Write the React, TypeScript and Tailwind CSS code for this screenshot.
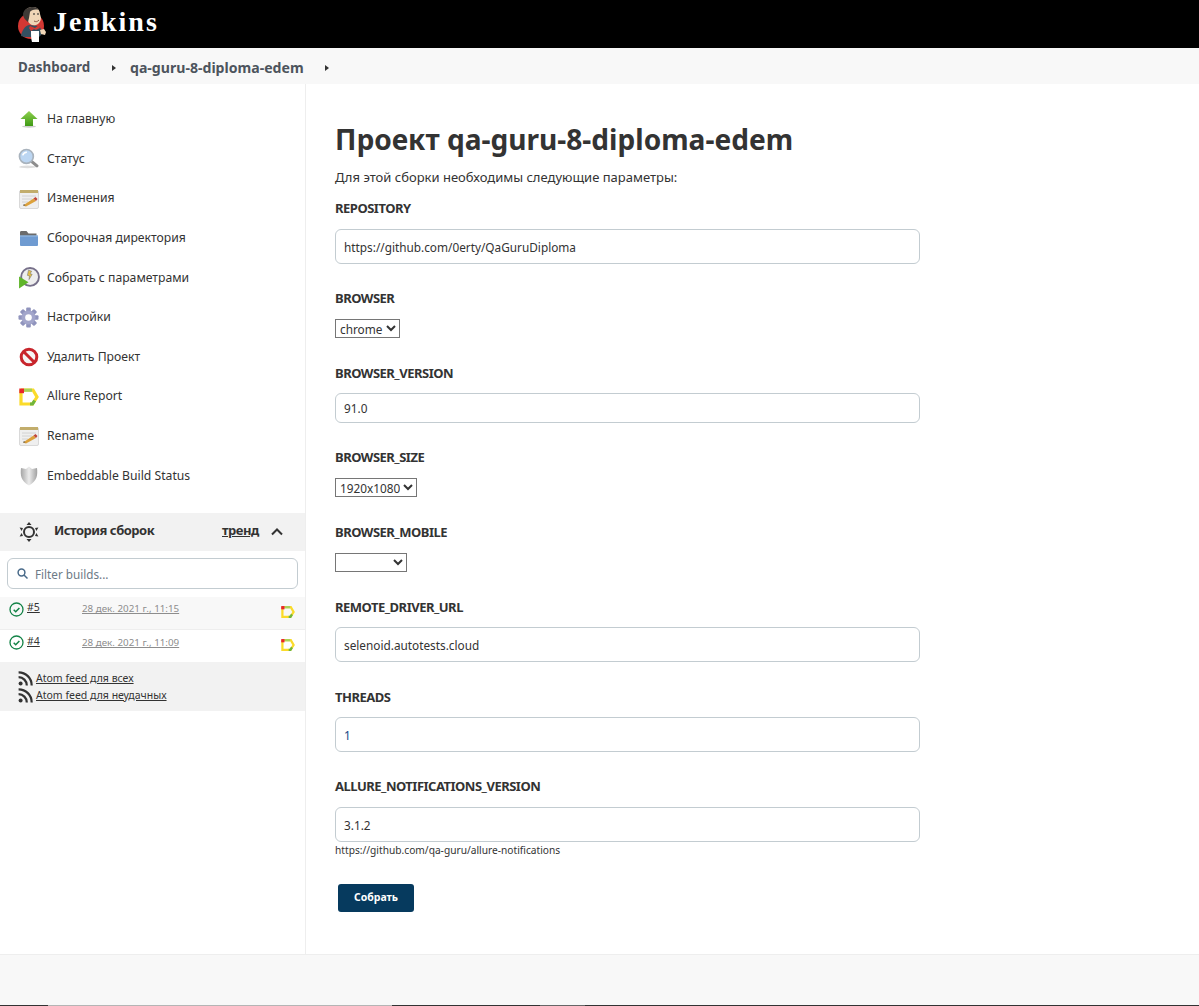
import type { ReactNode } from "react"

function JenkinsLogo() {
  return (
    <svg width="30" height="37" viewBox="0 0 30 37" className="shrink-0">
      <circle cx="14" cy="20" r="13" fill="#d33833" />
      <path d="M4 30c1-6 4-10 8-11l9 1c3 1 4 5 4 8l-4 4-5-1H8z" fill="#335061" />
      <path d="M7 7c1-4 5-6 9-6 4 0 7 3 7 7l1 4c0 3-2 6-5 7-4 1-7-1-8-4-2-2-4-4-4-8z" fill="#f0d6b7" />
      <path d="M6 8c1-5 5-7 10-7 3 0 5 1 6 3-4-1-8 0-9 2l-1 6-1 4C8 14 6 11 6 8z" fill="#3f3a36" />
      <path d="M16 8h2M20 8h2" stroke="#222" strokeWidth="1" />
      <path d="M17 15c2 1 3 1 5-1" stroke="#8c5a46" strokeWidth="1" fill="none" />
      <path d="M13 20l5 2 4-3 1 3-4 2-2-1-3 2-2-3z" fill="#d33833" />
      <path d="M14 25h8v11h-7c-1-3-1-7-1-11z" fill="#fff" />
      <path d="M23 24l4-1 2 3-1 3-4-1z" fill="#f0d6b7" />
    </svg>
  )
}

function HomeIcon() {
  return (
    <svg width="20" height="20" viewBox="0 0 20 20">
      <defs>
        <linearGradient id="hg" x1="0" y1="0" x2="0" y2="1">
          <stop offset="0" stopColor="#8fd14f" />
          <stop offset="1" stopColor="#3f9a15" />
        </linearGradient>
      </defs>
      <ellipse cx="10" cy="17.5" rx="7" ry="1.2" fill="#ccc" />
      <path d="M10 2l8.5 8H14v7H6v-7H1.500z" fill="url(#hg)" />
    </svg>
  )
}

function SearchIcon() {
  return (
    <svg width="21" height="21" viewBox="0 0 20 20">
      <ellipse cx="9" cy="18" rx="8" ry="1.3" fill="#ddd" />
      <path d="M12 12l6 5" stroke="#8d8d8d" strokeWidth="3" strokeLinecap="round" />
      <circle cx="8" cy="8" r="6.6" fill="#bcd6f2" stroke="#a9b3bd" strokeWidth="1.6" />
      <path d="M4.5 7a4 4 0 0 1 4-3" stroke="#fff" strokeWidth="1.5" fill="none" />
    </svg>
  )
}

function NotepadIcon() {
  return (
    <svg width="20" height="20" viewBox="0 0 20 20">
      <rect x="0.5" y="1.5" width="19" height="18" rx="1.5" fill="#efefef" stroke="#c4c4c4" strokeWidth="0.6" />
      <rect x="1" y="1" width="18" height="3" fill="#c2ad6c" />
      <path d="M3 7h14M3 10h10M3 13h6" stroke="#d2d2d2" strokeWidth="1" />
      <path d="M4 16.500L14.500 9.500l2.500 2.500-10 5.500z" fill="#dca13b" />
      <path d="M14.500 9.500l2-1.500 2 2-1.500 2z" fill="#c0453a" />
      <path d="M4 16.500l1-1.500 1.500 1.500z" fill="#555" />
    </svg>
  )
}

function FolderIcon() {
  return (
    <svg width="20" height="20" viewBox="0 0 20 20">
      <path d="M1 4.500C1 3.500 1.500 3 2.500 3h5l2 2.500h8V9H1z" fill="#6b6b6b" />
      <path d="M1 7.500h18V17a1 1 0 0 1-1 1H2a1 1 0 0 1-1-1z" fill="#6f9bd1" />
      <path d="M1 7.500h18v1H1z" fill="#9bbce3" />
    </svg>
  )
}

function BuildIcon() {
  return (
    <svg width="22" height="22" viewBox="0 0 21 21">
      <circle cx="11.500" cy="9.500" r="8.500" fill="#eee" stroke="#77708a" strokeWidth="1.800" />
      <path d="M10 3l3 1-1.500 2.500 2 .5-3 5 .5-3.500-2-.5z" fill="#e6c24a" stroke="#6b6b6b" strokeWidth="0.5" />
      <path d="M1 9l9 5.500L1 20.500z" fill="#5fb52a" />
    </svg>
  )
}

function GearIcon() {
  return (
    <svg width="21" height="21" viewBox="0 0 21 21">
      {[0, 45, 90, 135, 180, 225, 270, 315].map((a) => (
        <rect key={a} x="8.200" y="0.500" width="4.600" height="6" rx="1" fill="#9094bd" transform={`rotate(${a} 10.500 10.500)`} />
      ))}
      <circle cx="10.500" cy="10.500" r="7" fill="#a3a6cb" />
      <circle cx="10.500" cy="10.500" r="3.300" fill="#fff" />
    </svg>
  )
}

function NoIcon() {
  return (
    <svg width="20" height="20" viewBox="0 0 20 20">
      <circle cx="10" cy="10" r="7.800" fill="#f5f5f5" stroke="#c8252c" strokeWidth="3" />
      <path d="M5 5l10 10" stroke="#c8252c" strokeWidth="3" />
    </svg>
  )
}

function AllureIcon({ size }: { size: number }) {
  return (
    <svg width={size} height={size} viewBox="0 0 20 20" fill="none" strokeWidth="3.200">
      <path d="M2 3v14h11.500l4.500-7-4-7H2" stroke="#fbdb2a" />
      <path d="M5 3.200h8" stroke="#a6d15a" />
      <rect x="0.300" y="1.500" width="4.700" height="4.700" fill="#e8262a" />
      <path d="M11 17h2.500l2.200-3.500" stroke="#6fb53d" />
    </svg>
  )
}

function ShieldIcon() {
  return (
    <svg width="20" height="20" viewBox="0 0 20 20">
      <defs>
        <linearGradient id="sg" x1="0" y1="0" x2="1" y2="0">
          <stop offset="0" stopColor="#a5a5a5" />
          <stop offset="0.5" stopColor="#ececec" />
          <stop offset="1" stopColor="#a0a0a0" />
        </linearGradient>
      </defs>
      <path d="M10 0.500l3 2.500 5-1c.8 7 .2 13-8 17.500C1.800 15 1.200 9 2 2l5 1z" fill="url(#sg)" />
    </svg>
  )
}

function HistoryIcon() {
  return (
    <svg width="20" height="20" viewBox="0 0 20 20" fill="#333">
      <circle cx="10" cy="10" r="5" fill="none" stroke="#333" strokeWidth="2" />
      <path d="M10 0l2.500 3h-5zM10 20l-2.500-3h5zM.6 5.500l3.400.6L2.600 9zM19.400 5.500L16 6.100 17.400 9zM.6 14.500l2-3.400L4 14zM19.400 14.500l-2-3.400L16 14z" />
    </svg>
  )
}

function SuccessIcon() {
  return (
    <svg width="15" height="15" viewBox="0 0 15 15" fill="none" stroke="#138347" strokeWidth="1.300">
      <circle cx="7.500" cy="7.500" r="6.500" />
      <path d="M4.700 7.800l2 1.900 3.700-3.800" strokeWidth="1.500" />
    </svg>
  )
}

function RssIcon() {
  return (
    <svg width="15" height="15" viewBox="0 0 15 15" fill="none" stroke="#333" strokeWidth="2.200">
      <circle cx="2.600" cy="12.400" r="2" fill="#333" stroke="none" />
      <path d="M.6 6.200a8.200 8.200 0 0 1 8.200 8.200" />
      <path d="M.6 1.300a13.100 13.100 0 0 1 13.100 13.100" />
    </svg>
  )
}

function Caret() {
  return <span className="block w-0 h-0 border-y-[3.5px] border-y-transparent border-l-[4px] border-l-[#333]" />
}

const tasks: { label: string; icon: ReactNode }[] = [
  { label: "На главную", icon: <HomeIcon /> },
  { label: "Статус", icon: <SearchIcon /> },
  { label: "Изменения", icon: <NotepadIcon /> },
  { label: "Сборочная директория", icon: <FolderIcon /> },
  { label: "Собрать с параметрами", icon: <BuildIcon /> },
  { label: "Настройки", icon: <GearIcon /> },
  { label: "Удалить Проект", icon: <NoIcon /> },
  { label: "Allure Report", icon: <AllureIcon size={20} /> },
  { label: "Rename", icon: <NotepadIcon /> },
  { label: "Embeddable Build Status", icon: <ShieldIcon /> },
]

const builds = [
  { id: "#5", date: "28 дек. 2021 г., 11:15", rowClass: "bg-[#f8f8f8] border-b border-[#eeeeee] h-[33px] pt-[3px]", iconClass: "mt-[2px]" },
  { id: "#4", date: "28 дек. 2021 г., 11:09", rowClass: "bg-white h-[32px] pt-[4px]", iconClass: "mt-[1px]" },
]

function Label({ children }: { children: ReactNode }) {
  return <div className="h-[18px] leading-[18px] text-[13px] tracking-[-0.5px] font-bold text-[#333]">{children}</div>
}

type TextParamProps = { label: string; value: string; short?: boolean; blue?: boolean; box: string }

function TextParam({ label, value, short, blue, box }: TextParamProps) {
  return (
    <div className={box}>
      <Label>{label}</Label>
      <input
        readOnly
        value={value}
        className={`block w-[585px] px-[8px] border border-[#c3ccd1] rounded-[6px] bg-white text-[11.8px] outline-none ${short ? "h-[30px] mt-[11px]" : "h-[35px]"} ${blue ? "text-[#204a87]" : "text-[#333]"}`}
      />
    </div>
  )
}

type SelectParamProps = { label: string; value: string; options: string[]; width: string; box: string }

function SelectParam({ label, value, options, width, box }: SelectParamProps) {
  return (
    <div className={box}>
      <Label>{label}</Label>
      <select
        defaultValue={value}
        className={`block mt-[12px] h-[19px] border border-[#767676] bg-white text-[11.8px] text-[#333] ${width}`}
      >
        {options.map((o) => (
          <option key={o}>{o}</option>
        ))}
      </select>
    </div>
  )
}

export default function App() {
  return (
    <div className="h-[1006px] flex flex-col overflow-hidden bg-white text-[#333] font-['Noto_Sans',sans-serif]">
      <header className="h-[48px] shrink-0 bg-black flex items-center pl-[17px]">
        <JenkinsLogo />
        <span className="ml-[6px] text-[28px] leading-none font-bold text-white tracking-[2px] font-['Liberation_Serif',serif] -mt-[4px]">
          Jenkins
        </span>
      </header>

      <nav className="h-[36px] shrink-0 bg-[#f8f8f8] flex items-center pt-[3px] font-bold text-[#4d545d]">
        <span className="ml-[18px] w-[72px] text-[13.4px]">Dashboard</span>
        <span className="ml-[22px]"><Caret /></span>
        <span className="ml-[14px] w-[174px] whitespace-nowrap text-[14.1px]">qa-guru-8-diploma-edem</span>
        <span className="ml-[21px]"><Caret /></span>
      </nav>

      <div className="flex-1 flex min-h-0">
        <aside className="w-[306px] shrink-0 border-r border-[#eeeeee] pt-[15.6px]">
          <ul>
            {tasks.map((t) => (
              <li key={t.label} className="h-[39.6px] flex items-center text-[12.2px] text-[#333]">
                <span className="w-[47px] flex justify-center pl-[14px] pr-[4px] shrink-0">{t.icon}</span>
                {t.label}
              </li>
            ))}
          </ul>

          <div className="mt-[17.4px] h-[38px] bg-[#f2f2f2] flex items-center text-[13px] tracking-[-0.5px] font-bold">
            <span className="ml-[19px] mr-[15px]"><HistoryIcon /></span>
            <span className="w-[168px] -mt-[2px]">История сборок</span>
            <span className="underline -mt-[2px]">тренд</span>
            <svg width="12" height="8" viewBox="0 0 12 8" className="ml-[12px]" fill="none" stroke="#333" strokeWidth="2">
              <path d="M1 6.500l5-5 5 5" />
            </svg>
          </div>

          <div className="px-[7px] pt-[7px] pb-[8px]">
            <div className="h-[31px] border border-[#c3ccd1] rounded-[6px] flex items-center pl-[9px]">
              <svg width="11" height="11" viewBox="0 0 11 11" fill="none" stroke="#4a6b8a" strokeWidth="1.500">
                <circle cx="4.500" cy="4.500" r="3.400" />
                <path d="M7 7l3.500 3.500" />
              </svg>
              <span className="ml-[7px] pt-[3px] text-[11.7px] text-[#6d7a86]">Filter builds...</span>
            </div>
          </div>

          {builds.map((b) => (
            <div key={b.id} className={`relative flex items-start ${b.rowClass}`}>
              <span className={`ml-[9px] ${b.iconClass}`}><SuccessIcon /></span>
              <span className="ml-[3px] w-[55px] underline text-[10.5px] text-[#333]">{b.id}</span>
              <span className="mt-[2px] underline text-[9.8px] text-[#8d8d8d]">{b.date}</span>
              <span className="absolute left-[281px] top-[8px]"><AllureIcon size={14} /></span>
            </div>
          ))}

          <div className="h-[49px] bg-[#f2f2f2] pl-[18px] pt-[8px] text-[10.5px] text-[#333]">
            <div className="flex items-center h-[17px]">
              <RssIcon />
              <span className="ml-[3px] underline">Atom feed для всех</span>
            </div>
            <div className="flex items-center h-[17px]">
              <RssIcon />
              <span className="ml-[3px] underline">Atom feed для неудачных</span>
            </div>
          </div>
        </aside>

        <main className="flex-1 pl-[29px] pt-[36px]">
          <h1 className="text-[28.1px] leading-[38px] font-bold text-[#333] whitespace-nowrap">Проект qa-guru-8-diploma-edem</h1>
          <p className="mt-[10px] h-[18px] leading-[18px] text-[13px]">Для этой сборки необходимы следующие параметры:</p>
          <div className="mt-[13px]">
            <TextParam label="REPOSITORY" value="https://github.com/0erty/QaGuruDiploma" box="mb-[25px] [&>input]:mt-[12px]" />
            <SelectParam label="BROWSER" value="chrome" options={["chrome", "firefox"]} width="w-[65px]" box="mb-[26px]" />
            <TextParam label="BROWSER_VERSION" value="91.0" short box="mb-[25px]" />
            <SelectParam label="BROWSER_SIZE" value="1920x1080" options={["1920x1080", "1366x768"]} width="w-[82px]" box="mb-[26px]" />
            <SelectParam label="BROWSER_MOBILE" value="" options={["", "Pixel 2"]} width="w-[72px]" box="mb-[26px]" />
            <TextParam label="REMOTE_DRIVER_URL" value="selenoid.autotests.cloud" box="mb-[26px] [&>input]:mt-[11px]" />
            <TextParam label="THREADS" value="1" blue box="mb-[25px] [&>input]:mt-[11px]" />
            <TextParam label="ALLURE_NOTIFICATIONS_VERSION" value="3.1.2" box="[&>input]:mt-[12px]" />
          </div>
          <p className="text-[10.2px] leading-[16px] text-[#333]">https://github.com/qa-guru/allure-notifications</p>
          <button className="mt-[26px] ml-[3px] h-[28px] w-[76px] rounded-[3px] bg-[#063a5e] text-white text-[10.5px] font-bold">
            Собрать
          </button>
        </main>
      </div>

      <footer className="h-[52px] shrink-0 bg-[#f8f8f8] border-t border-[#eeeeee] flex flex-col justify-end">
        <div className="h-[1px] flex bg-[#333]">
          <span className="ml-[48px] w-[344px] bg-[#b5b5b5]" />
          <span className="ml-[148px] w-[45px] bg-[#666666]" />
        </div>
      </footer>
    </div>
  )
}
